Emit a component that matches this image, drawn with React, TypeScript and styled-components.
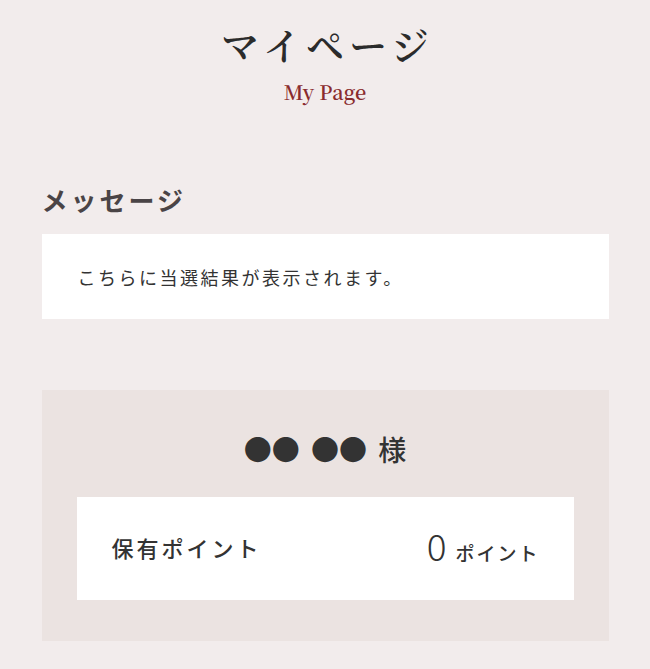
import React from "react"
import styled, { createGlobalStyle } from "styled-components"

const GlobalStyle = createGlobalStyle`
  html, body {
    margin: 0;
    padding: 0;
    background: #f2ecec;
  }
  body {
    font-family: "Noto Sans CJK JP", "Noto Sans", sans-serif;
    color: #333;
  }
`

const Page = styled.main`
  width: 567px;
  margin: 0 auto;
  padding-bottom: 30px;
`

const Header = styled.header`
  text-align: center;
  padding-top: 25px;
`

const Title = styled.h1`
  margin: 0;
  font-family: "Noto Serif CJK JP", "Noto Sans CJK JP", serif;
  font-size: 38px;
  font-weight: 600;
  line-height: 1;
  letter-spacing: 0.13em;
  padding-left: 0.13em;
  color: #2b2b2b;
`

const SubTitle = styled.p`
  margin: 19px 0 0;
  font-family: "Noto Serif CJK JP", "Liberation Serif", serif;
  font-size: 20px;
  font-weight: 600;
  line-height: 1;
  color: #8a2b2e;
`

const SectionTitle = styled.h2`
  margin: 85px 0 0;
  font-size: 26px;
  font-weight: 700;
  line-height: 1;
  letter-spacing: 3px;
  color: #4a4446;
`

const MessageBox = styled.div`
  margin-top: 21px;
  height: 85px;
  background: #fff;
  display: flex;
  align-items: center;
  padding: 0 36px;
  font-size: 18px;
  letter-spacing: 2.5px;
  color: #333;
`

const MemberCard = styled.section`
  margin-top: 71px;
  background: #ebe3e1;
  padding: 45px 35px 41px;
`

const MemberName = styled.h3`
  margin: 0;
  text-align: center;
  font-size: 28px;
  font-weight: 500;
  line-height: 1;
  word-spacing: 5px;
  color: #333;
`

const PointRow = styled.div`
  margin-top: 34px;
  height: 103px;
  box-sizing: border-box;
  padding: 0 34px 4px 35px;
  background: #fff;
  display: flex;
  align-items: center;
  justify-content: space-between;
`

const PointLabel = styled.span`
  font-size: 22px;
  font-weight: 500;
  letter-spacing: 3px;
  color: #333;
`

const PointValue = styled.span`
  display: flex;
  align-items: baseline;
  gap: 9px;
`

const PointNumber = styled.span`
  font-size: 37px;
  font-weight: 300;
  line-height: 1;
  color: #333;
`

const PointUnit = styled.span`
  font-size: 19px;
  font-weight: 500;
  letter-spacing: 2px;
  color: #333;
`

export default function App() {
  return (
    <>
      <GlobalStyle />
      <Page>
        <Header>
          <Title>マイページ</Title>
          <SubTitle>My Page</SubTitle>
        </Header>

        <SectionTitle>メッセージ</SectionTitle>
        <MessageBox>こちらに当選結果が表示されます。</MessageBox>

        <MemberCard>
          <MemberName>●● ●● 様</MemberName>
          <PointRow>
            <PointLabel>保有ポイント</PointLabel>
            <PointValue>
              <PointNumber>0</PointNumber>
              <PointUnit>ポイント</PointUnit>
            </PointValue>
          </PointRow>
        </MemberCard>
      </Page>
    </>
  )
}
